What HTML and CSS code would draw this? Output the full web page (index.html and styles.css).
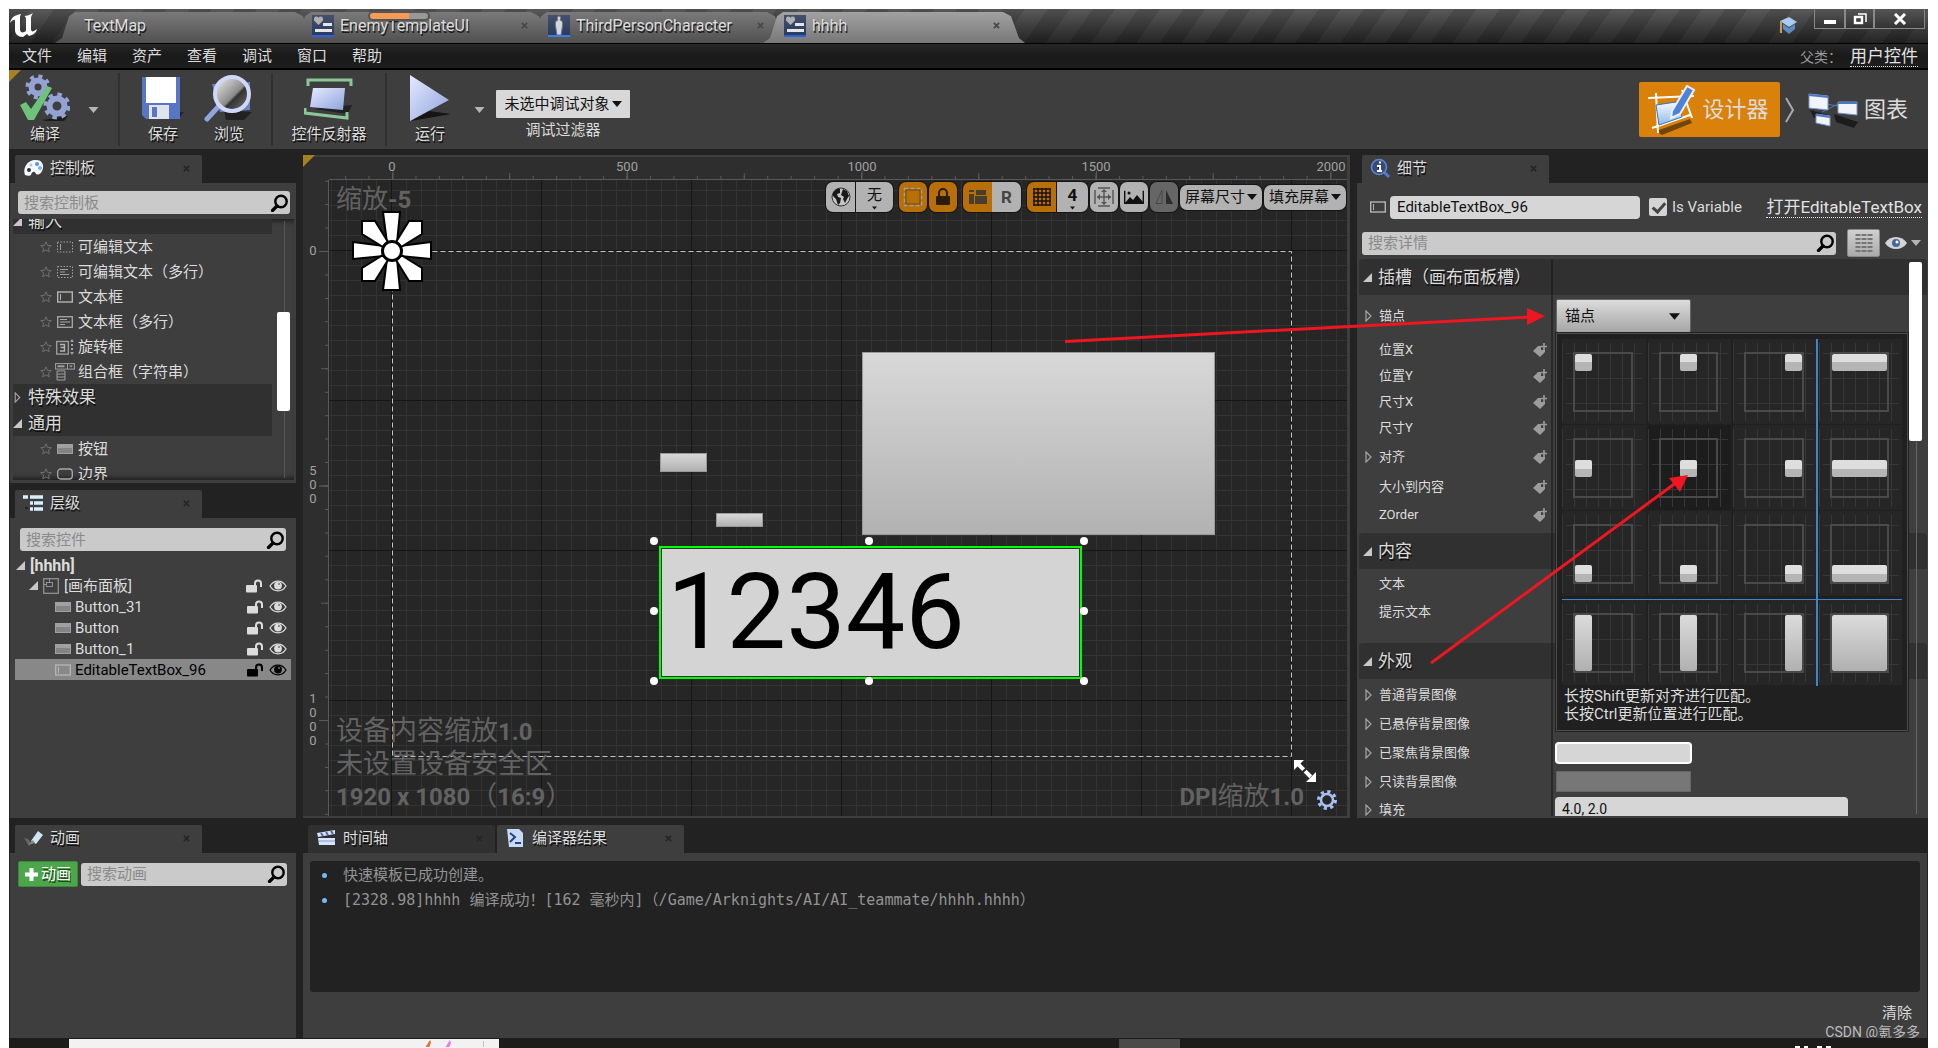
FILE: index.html
```html
<!DOCTYPE html>
<html lang="zh-CN">
<head>
<meta charset="utf-8">
<title>hhhh</title>
<link rel="stylesheet" href="styles.css">
</head>
<body>
<svg class="defs" aria-hidden="true">
  <defs>
    <linearGradient id="blue" x1="0" y1="0" x2="1" y2="1"><stop offset="0" stop-color="#e4eaff"/><stop offset="1" stop-color="#8fa3dc"/></linearGradient>
    <linearGradient id="ice" x1="0" y1="0" x2="0" y2="1"><stop offset="0" stop-color="#f6faff"/><stop offset="1" stop-color="#8fbce8"/></linearGradient>
    <linearGradient id="glass" x1="0" y1="0" x2="1" y2="1"><stop offset="0" stop-color="#f4f4f4"/><stop offset=".55" stop-color="#8a8a8a"/><stop offset=".6" stop-color="#333"/><stop offset="1" stop-color="#777"/></linearGradient>
    <linearGradient id="slate" x1="0" y1="0" x2="0" y2="1"><stop offset="0" stop-color="#44506b"/><stop offset="1" stop-color="#27395f"/></linearGradient>
  </defs>
  <symbol id="i-close" viewBox="0 0 8 8"><path d="M1 1l6 6M7 1L1 7" stroke="currentColor" stroke-width="2"/></symbol>
  <symbol id="i-search" viewBox="0 0 18 18"><circle cx="11" cy="7.500" r="5.700" fill="none" stroke="#000" stroke-width="2.400"/><path d="M7 12l-4.500 4.500" stroke="#000" stroke-width="3.200" stroke-linecap="round"/></symbol>
  <symbol id="i-caret" viewBox="0 0 10 6"><path d="M0 0h10L5 6z" fill="currentColor"/></symbol>
  <symbol id="i-open" viewBox="0 0 9 9"><path d="M9 0v9H0z" fill="#c8c8c8"/></symbol>
  <symbol id="i-shut" viewBox="0 0 7 12"><path d="M1 1l5 5-5 5z" fill="none" stroke="#a5a5a5" stroke-width="1.200"/></symbol>
  <symbol id="i-star" viewBox="0 0 12 12"><path d="M6 .8l1.500 3.500 3.800.3-2.900 2.500.9 3.700L6 8.900l-3.300 1.900.9-3.700L.7 4.600l3.800-.3z" fill="none" stroke="#707070"/></symbol>
  <symbol id="i-edit" viewBox="0 0 16 12"><rect x=".5" y="1" width="15" height="10" fill="none" stroke="#a0a0a0" stroke-dasharray="1.500 1.500"/><path d="M3.500 3v6" stroke="#a0a0a0"/></symbol>
  <symbol id="i-editm" viewBox="0 0 16 12"><rect x=".5" y=".5" width="15" height="11" fill="none" stroke="#a0a0a0" stroke-dasharray="1.500 1.500"/><path d="M3 3.500h8M3 6h5M3 8.500h9" stroke="#a0a0a0"/></symbol>
  <symbol id="i-box" viewBox="0 0 16 12"><rect x=".7" y="1" width="14.600" height="10" fill="none" stroke="#b4b4b4" stroke-width="1.400"/><path d="M3.500 3v6" stroke="#b4b4b4"/></symbol>
  <symbol id="i-boxm" viewBox="0 0 16 12"><rect x=".7" y=".7" width="14.600" height="10.600" fill="none" stroke="#a8a8a8" stroke-width="1.300"/><path d="M3 3.500h7M3 6h10M3 8.500h5" stroke="#a8a8a8"/></symbol>
  <symbol id="i-spin" viewBox="0 0 18 16"><rect x=".7" y="2.500" width="11.600" height="12.600" fill="none" stroke="#a0a0a0" stroke-width="1.300"/><path d="M4 5.500h4.500v6.500H4M4.500 8.500h4" fill="none" stroke="#b4b4b4" stroke-width="1.400"/><path d="M14 3l2-3 2 3zM14 13l2 3 2-3zM15 5h2v2h-2zM15 9h2v2h-2z" fill="#a0a0a0"/></symbol>
  <symbol id="i-combo" viewBox="0 0 20 18"><rect x=".6" y=".6" width="18.800" height="5.500" fill="none" stroke="#a0a0a0"/><path d="M2.500 3.300h7" stroke="#a0a0a0" stroke-width="2"/><path d="M12.500 1v5" stroke="#a0a0a0"/><path d="M14 2.500h4l-2 2z" fill="#a0a0a0"/><path d="M2 8h8v9H2zM2 11h8M2 14h8" fill="none" stroke="#a0a0a0"/></symbol>
  <symbol id="i-btn" viewBox="0 0 16 12"><rect y="1" width="16" height="10" fill="#a0a0a0"/><rect x="1" y="5" width="14" height="5" fill="#848484"/></symbol>
  <symbol id="i-border" viewBox="0 0 16 12"><rect x=".7" y="1" width="14.600" height="10" rx="3" fill="none" stroke="#a8a8a8" stroke-width="1.300"/></symbol>
  <symbol id="i-canvas" viewBox="0 0 16 16"><rect x=".7" y=".7" width="14.600" height="14.600" fill="none" stroke="#909090" stroke-width="1.300"/><rect x="3.500" y="4.500" width="6" height="4" fill="none" stroke="#909090"/><path d="M6.500 1v3M1 6.500h2" stroke="#8292c8"/></symbol>
  <symbol id="i-unlock" viewBox="0 0 17 14"><rect y="6" width="11" height="7.500" rx="1" fill="currentColor"/><path d="M9 6V4.500a3 3 0 0 1 6 0V8" fill="none" stroke="currentColor" stroke-width="2"/></symbol>
  <symbol id="i-eye" viewBox="0 0 18 12"><path d="M1 6c4-6.500 12-6.500 16 0-4 6.500-12 6.500-16 0z" fill="none" stroke="currentColor" stroke-width="1.300"/><circle cx="9" cy="5.600" r="3.900" fill="currentColor"/><circle cx="10" cy="4" r="1" fill="#777"/></symbol>
  <symbol id="i-tag" viewBox="0 0 14 14"><path d="M0 8l5-5h3v4h4v2l-5 5z" fill="#9c9c9c"/><path d="M11 0v7M8 3.500h6" stroke="#9c9c9c" stroke-width="1.600"/></symbol>
  <symbol id="i-widget" viewBox="0 0 22 22"><rect width="22" height="22" fill="url(#slate)"/><path d="M6.500 10L2 5.500C1 2 5 0 6.500 3 8 0 12 2 11 5.500z" fill="#b0b0b0"/><path d="M11 9.500h9M3 15.500h17" stroke="#e6e6e6" stroke-width="3"/><path d="M0 21h22" stroke="#2b62d8" stroke-width="2"/></symbol>
</svg>

<div class="app">
  <header class="titlebar">
    <svg class="logo" viewBox="0 0 32 30"><path d="M1 12C2 7 5 4 12 3c-1 2-1 3-1 5v10c0 3 2 4 4 3 1 0 2-1 2-2V8c0-2-1-3-2-3 3 0 6-1 9-3-1 2-2 3-2 5v11c0 2 1 3 3 2l3-2c-1 4-4 6-8 7l-2-2-4 3c-5 0-8-3-8-7V10c0-2-2-2-5 2z" fill="#fff"/></svg>
    <nav class="tabs">
      <button class="tab first">TextMap</button>
      <button class="tab second"><svg width="22" height="22"><use href="#i-widget"/></svg>EnemyTemplateUI<svg class="x" width="7" height="7"><use href="#i-close"/></svg></button>
      <button class="tab third"><svg width="22" height="22" viewBox="0 0 22 22"><rect width="22" height="22" fill="url(#slate)"/><path d="M11 1c2 0 2 3 1 4 3 1 3 3 2 9l-1 6H9l-1-6C7 8 7 6 10 5 9 4 9 1 11 1z" fill="#d4d8de" stroke="#6f7682"/><path d="M0 21h22" stroke="#3f7ce8" stroke-width="2"/></svg>ThirdPersonCharacter<svg class="x" width="7" height="7"><use href="#i-close"/></svg></button>
      <button class="tab active"><svg width="22" height="22"><use href="#i-widget"/></svg>hhhh<svg class="x" width="7" height="7"><use href="#i-close"/></svg></button>
    </nav>
    <span class="progress"></span>
    <div class="wincontrols">
      <svg width="20" height="20" viewBox="0 0 20 20"><path d="M2 5l9-4 8 5-8 5z" fill="#a9cdf0"/><path d="M5 8l6 4 6-4v5l-6 5-6-5z" fill="#5f8cc0"/><path d="M3 5v12" stroke="#c99a5b" stroke-width="2"/></svg>
      <div class="winbtns">
        <button aria-label="最小化"><svg width="14" height="12" viewBox="0 0 14 12"><path d="M1 9h12" stroke="#fff" stroke-width="4"/></svg></button><button aria-label="还原"><svg width="14" height="12" viewBox="0 0 14 12"><path d="M5 1h8v8" fill="none" stroke="#fff" stroke-width="1.500"/><rect x="2" y="4" width="7" height="6" fill="none" stroke="#fff" stroke-width="2.400"/></svg></button><button aria-label="关闭"><svg width="14" height="12" viewBox="0 0 14 12"><path d="M2 1l10 10M12 1L2 11" stroke="#fff" stroke-width="3"/></svg></button>
      </div>
    </div>
  </header>

  <nav class="menubar">
    <button>文件</button><button>编辑</button><button>资产</button><button>查看</button><button>调试</button><button>窗口</button><button>帮助</button>
    <span class="parent">父类：<a href="#">用户控件</a></span>
  </nav>

  <div class="toolbar">
    <button class="tool compile"><svg width="50" height="48" viewBox="0 0 50 48"><path d="M22 46l26-4-4 5H26z" fill="#1c1c1c"/><g fill="none" stroke="#93a3d4"><circle cx="18" cy="13" r="6.500" stroke-width="6"/><circle cx="18" cy="13" r="10.500" stroke-width="4" stroke-dasharray="4 4.250"/><circle cx="37" cy="32" r="7.500" stroke-width="6"/><circle cx="37" cy="32" r="11.500" stroke-width="4" stroke-dasharray="4.500 4.530"/></g><path d="M0 31l6-3 5 7L27 12l5 2-18 32H8z" fill="#6fc27c"/></svg>编译</button>
    <button class="drop" aria-label="编译选项"><svg width="11" height="6"><use href="#i-caret"/></svg></button>
    <i class="sep"></i>
    <button class="tool save"><svg width="50" height="48" viewBox="0 0 50 48"><path d="M10 40l36-2-6 7H12z" fill="#222"/><path d="M4 3h38v42H8l-4-4z" fill="#5876c4"/><path d="M8 3h30v26H8z" fill="#fff"/><path d="M11 31h20v14H11z" fill="#dfe3ee"/><path d="M14 33h5v10h-5z" fill="#5876c4"/></svg>保存</button>
    <button class="tool browse"><svg width="50" height="48" viewBox="0 0 50 48"><path d="M20 36l28 2-8 8H22z" fill="#222"/><path d="M8 10l38-2v28l-30 2z" fill="#6d83c0"/><path d="M14 33L3 45" stroke="#8fa5de" stroke-width="5" stroke-linecap="round"/><circle cx="28" cy="20" r="17" fill="url(#glass)" stroke="#cfd8f6" stroke-width="4"/></svg>浏览</button>
    <i class="sep"></i>
    <button class="tool reflect"><svg width="50" height="48" viewBox="0 0 50 48"><path d="M10 35l38-4-4 9z" fill="#222"/><path d="M4 12V6h43v6M1 34v5l42 5v-6" fill="none" stroke="#8cc79a" stroke-width="3"/><path d="M9 14h32l-2 22-33-3z" fill="url(#blue)"/></svg>控件反射器</button>
    <i class="sep"></i>
    <button class="tool play"><svg width="50" height="48" viewBox="0 0 50 48"><path d="M6 47l40-7-22-3z" fill="#151515"/><path d="M5 1l39 25L5 47z" fill="url(#blue)"/></svg>运行</button>
    <button class="drop run" aria-label="运行选项"><svg width="11" height="6"><use href="#i-caret"/></svg></button>
    <div class="debug"><button class="select">未选中调试对象<svg width="10" height="6"><use href="#i-caret"/></svg></button><span>调试过滤器</span></div>
    <div class="modes">
      <button class="mode on"><svg width="50" height="50" viewBox="0 0 50 50"><path d="M10 46l34-12 2 4-30 12z" fill="#70450c"/><path d="M2 13l46-2M6 43l38-13M10 8l2 40M36 5l10 28" stroke="#fff" stroke-width="2"/><path d="M10 20l20-3 6 15-23 8z" fill="url(#ice)" stroke="#3d73b8"/><path d="M26 26L41 1l7 4-14 24-9 4z" fill="#4d82d6" stroke="#e8f0fc" stroke-width="2"/></svg>设计器</button>
      <svg class="chev" width="10" height="26" viewBox="0 0 10 26"><path d="M1 1l7 12-7 12" fill="none" stroke="#aaa" stroke-width="2"/></svg>
      <button class="mode"><svg width="50" height="36" viewBox="0 0 50 36"><path d="M2 18l18 5-14 3zM26 22l24 8-4 6-18-6z" fill="#1c1c1c"/><path d="M18 12l12 2M14 20l20-10" stroke="#5877a8"/><g fill="#f2f4fa" stroke="#7896cf"><path d="M1 2l19 2v14L1 16zM30 10h19v13l-19-2zM8 22l14 2v10L8 31z"/></g><path d="M1 3l19 2M30 11h19M8 23l14 2" stroke="#4c77c4" stroke-width="2"/></svg>图表</button>
    </div>
  </div>

  <main class="main">
    <div class="left">
      <section class="dock">
        <button class="dtab"><svg width="22" height="18" viewBox="0 0 22 18"><path d="M2 16C-1 8 6 0 13 1c8 0 8 8 6 11-1 3-4 4-6 3-1-3-4-3-5 1-1 1-4 1-6 0z" fill="#f6f9ff"/><circle cx="14" cy="5" r="2" fill="#5596e0"/><circle cx="17" cy="9" r="2" fill="#7bb2ee"/><circle cx="8" cy="6" r="1.500" fill="#9cc4f0"/><circle cx="6" cy="11" r="2" fill="#333"/></svg>控制板<svg class="x" width="7" height="7"><use href="#i-close"/></svg></button>
        <div class="panel palette">
          <label class="search"><input type="text" placeholder="搜索控制板" aria-label="搜索控制板"><svg width="18" height="18"><use href="#i-search"/></svg></label>
          <div class="plist">
            <div class="group cut"><svg width="9" height="9"><use href="#i-open"/></svg>输入</div>
            <div class="item"><svg width="12" height="12"><use href="#i-star"/></svg><svg width="20" height="12"><use href="#i-edit"/></svg>可编辑文本</div>
            <div class="item"><svg width="12" height="12"><use href="#i-star"/></svg><svg width="20" height="12"><use href="#i-editm"/></svg>可编辑文本（多行）</div>
            <div class="item"><svg width="12" height="12"><use href="#i-star"/></svg><svg width="20" height="12"><use href="#i-box"/></svg>文本框</div>
            <div class="item"><svg width="12" height="12"><use href="#i-star"/></svg><svg width="20" height="12"><use href="#i-boxm"/></svg>文本框（多行）</div>
            <div class="item"><svg width="12" height="12"><use href="#i-star"/></svg><svg width="20" height="16"><use href="#i-spin"/></svg>旋转框</div>
            <div class="item"><svg width="12" height="12"><use href="#i-star"/></svg><svg width="20" height="18"><use href="#i-combo"/></svg>组合框（字符串）</div>
            <div class="group"><svg width="9" height="11"><use href="#i-shut"/></svg>特殊效果</div>
            <div class="group"><svg width="9" height="9"><use href="#i-open"/></svg>通用</div>
            <div class="item"><svg width="12" height="12"><use href="#i-star"/></svg><svg width="20" height="12"><use href="#i-btn"/></svg>按钮</div>
            <div class="item"><svg width="12" height="12"><use href="#i-star"/></svg><svg width="20" height="12"><use href="#i-border"/></svg>边界</div>
            <span class="scroll"></span>
          </div>
        </div>
      </section>
      <section class="dock">
        <button class="dtab"><svg width="22" height="18" viewBox="0 0 22 18"><path d="M0 3h5M7 3h13M7 9h3M11 9h9M7 15h3M11 15h9" stroke="#d8efff" stroke-width="3.500"/><path d="M2 14h3" stroke="#222" stroke-width="2"/></svg>层级<svg class="x" width="7" height="7"><use href="#i-close"/></svg></button>
        <div class="panel hier">
          <label class="search"><input type="text" placeholder="搜索控件" aria-label="搜索控件"><svg width="18" height="18"><use href="#i-search"/></svg></label>
          <div class="tree">
            <div class="node root"><svg width="9" height="9"><use href="#i-open"/></svg><span>[hhhh]</span></div>
            <div class="node sub"><svg width="9" height="9"><use href="#i-open"/></svg><svg width="16" height="16"><use href="#i-canvas"/></svg><span>[画布面板]</span><svg width="17" height="14"><use href="#i-unlock"/></svg><svg width="18" height="12"><use href="#i-eye"/></svg></div>
            <div class="node leaf"><svg width="16" height="12"><use href="#i-btn"/></svg><span>Button_31</span><svg width="17" height="14"><use href="#i-unlock"/></svg><svg width="18" height="12"><use href="#i-eye"/></svg></div>
            <div class="node leaf"><svg width="16" height="12"><use href="#i-btn"/></svg><span>Button</span><svg width="17" height="14"><use href="#i-unlock"/></svg><svg width="18" height="12"><use href="#i-eye"/></svg></div>
            <div class="node leaf"><svg width="16" height="12"><use href="#i-btn"/></svg><span>Button_1</span><svg width="17" height="14"><use href="#i-unlock"/></svg><svg width="18" height="12"><use href="#i-eye"/></svg></div>
            <div class="node leaf selected"><svg width="16" height="12"><use href="#i-box"/></svg><span>EditableTextBox_96</span><svg width="17" height="14"><use href="#i-unlock"/></svg><svg width="18" height="12"><use href="#i-eye"/></svg></div>
          </div>
        </div>
      </section>
    </div>

    <section class="designer">
      <svg class="rule-x"><path d="M63.500 20H1200" stroke="#5a5a5a" stroke-width="8" stroke-dasharray="1 233.500"/><path d="M63 21.500H1200" stroke="#5a5a5a" stroke-width="7" stroke-dasharray="1 116.250"/><path d="M16.100 23H1200" stroke="#5a5a5a" stroke-width="4" stroke-dasharray="1 22.450"/></svg>
      <svg class="rule-y"><path d="M20.500 71V700" stroke="#5a5a5a" stroke-width="9" stroke-dasharray="1 233.500"/><path d="M21.500 71V700" stroke="#5a5a5a" stroke-width="7" stroke-dasharray="1 116.250"/><path d="M23.500 .65V700" stroke="#5a5a5a" stroke-width="3" stroke-dasharray="1 22.450"/></svg>
      <span class="rx n0">0</span><span class="rx n500">500</span><span class="rx n1000">1000</span><span class="rx n1500">1500</span><span class="rx n2000">2000</span>
      <span class="ry m0">0</span><span class="ry m500">5<br>0<br>0</span><span class="ry m1000">1<br>0<br>0<br>0</span>
      <div class="view">
        <svg class="frame" viewBox="0 0 900 506"><rect x=".5" y=".5" width="899" height="505" fill="none" stroke="#c4c4c4" stroke-dasharray="5 3"/></svg>
        <div class="zoomtext">缩放<b>-5</b></div>
        <div class="info">设备内容缩放<b>1.0</b><br>未设置设备安全区<br><b>1920 x 1080</b>（<b>16:9</b>）</div>
        <div class="dpi"><b>DPI</b>缩放<b>1.0</b></div>
        <svg class="flower" viewBox="0 0 80 80"><g fill="#fff" stroke="#000" stroke-width="2"><path d="M31 1h17l-3 31H35zM31 79h17l-3-31H35zM1 31v17l31-3V35zM79 31v17l-31-3V35z"/><path d="M10 10h13l13 21-5 5-21-13zM70 10H57L44 31l5 5 21-13zM10 70h13l13-21-5-5-21 13zM70 70H57L44 49l5-5 21 13z"/><circle cx="40" cy="40" r="9.500" stroke-width="3"/></g></svg>
        <button class="w big" aria-label="Button_31"></button>
        <button class="w s1" aria-label="Button"></button>
        <button class="w s2" aria-label="Button_1"></button>
        <div class="sel"><input type="text" value="12346" aria-label="EditableTextBox_96">
          <i class="h t l"></i><i class="h t c"></i><i class="h t r"></i><i class="h m l"></i><i class="h m r"></i><i class="h b l"></i><i class="h b c"></i><i class="h b r"></i>
        </div>
        <svg class="resize" viewBox="0 0 22 22"><path d="M4 4l14 14" stroke="#fff" stroke-width="4" stroke-dasharray="8 2"/><path d="M0 0h10L0 10zM22 22H12l10-10z" fill="#fff"/></svg>
        <svg class="gear" viewBox="0 0 20 20"><circle cx="10" cy="10" r="6" fill="none" stroke="#a9bff0" stroke-width="2.500"/><circle cx="10" cy="10" r="8.500" fill="none" stroke="#a9bff0" stroke-width="3" stroke-dasharray="3.300 3.375"/></svg>
        <div class="vtools">
          <div class="vgrp gap"><button aria-label="本地化"><svg width="20" height="20" viewBox="0 0 20 20"><circle cx="10" cy="10" r="9" fill="#c4c4c4" stroke="#333"/><path d="M2 6c3-5 6-5 7-4L9 6 6 7l1 3 3 1-1 5-2 2-2-6-3-3zM12 2l4 2 2 5-2 3-2 4-2-4 1-2-3-2 1-3z" fill="#1a1a1a"/></svg></button><button class="stack wide">无<svg width="5" height="4"><use href="#i-caret"/></svg></button></div>
          <button class="on" aria-label="虚线轮廓"><svg width="20" height="20" viewBox="0 0 20 20"><rect x="1.500" y="1.500" width="17" height="17" fill="none" stroke="#a3a09a" stroke-width="1.500" stroke-dasharray="4 2"/><rect x="3" y="3" width="14" height="14" fill="none" stroke="#6b4a18"/></svg></button>
          <button class="on gap" aria-label="锁定"><svg width="14" height="18" viewBox="0 0 14 18"><rect y="8" width="14" height="9" rx="1" fill="#2a1c05"/><path d="M3 8V5a4 4 0 0 1 8 0v3" fill="none" stroke="#2a1c05" stroke-width="2"/></svg></button>
          <div class="vgrp pair gap"><button class="on" aria-label="布局"><svg width="18" height="16" viewBox="0 0 18 16"><path d="M0 1h5v2H0zM0 5h5v10H0zM7 1h10v5H7zM6 7h12v8H6z" fill="#473e30"/></svg></button><button><b>R</b></button></div>
          <div class="vgrp"><button class="on" aria-label="网格对齐"><svg width="18" height="18" viewBox="0 0 18 18"><path d="M1 0v18M5 0v18M9 0v18M13 0v18M17 0v18M0 1h18M0 5h18M0 9h18M0 13h18M0 17h18" stroke="#1d1304" stroke-width="1.500"/></svg></button><button class="stack mid"><b>4</b><svg width="5" height="4"><use href="#i-caret"/></svg></button></div>
          <button aria-label="缩放至适合"><svg width="20" height="20" viewBox="0 0 20 20"><path d="M1 3v14M19 3v14M4 1h12M4 19h12M10 3v14M3 10h14" stroke="#555" stroke-width="1.400"/><path d="M10 2l3 3H7zM10 18l3-3H7zM3 10l3-3v6zM17 10l-3-3v6z" fill="#555"/></svg></button>
          <button aria-label="背景"><svg width="20" height="14" viewBox="0 0 20 14"><path d="M.7.7v12.600h18.600V.7" fill="none" stroke="#111" stroke-width="1.400"/><path d="M1 13l5-6 3 3 4-5 6 7v1z" fill="#111"/><circle cx="5" cy="3" r="1.500" fill="#111"/></svg></button>
          <button class="off" aria-label="镜像"><svg width="18" height="16" viewBox="0 0 18 16"><path d="M7 1v13.500H1z" fill="none" stroke="#484848"/><path d="M11 1v14h7z" fill="#2c2c2c"/></svg></button>
          <button class="text">屏幕尺寸<svg width="10" height="6"><use href="#i-caret"/></svg></button>
          <button class="text">填充屏幕<svg width="10" height="6"><use href="#i-caret"/></svg></button>
        </div>
      </div>
    </section>

    <section class="dock details">
      <button class="dtab"><svg width="22" height="20" viewBox="0 0 22 20"><path d="M14 14l5 5" stroke="#4d7ad2" stroke-width="3"/><circle cx="9" cy="9" r="7.500" fill="#3a4a72" stroke="#5d86d8" stroke-width="1.600"/><path d="M7 8h3v5M7 13h5M9 4.500h2" stroke="#fff" stroke-width="2"/></svg>细节<svg class="x" width="7" height="7"><use href="#i-close"/></svg></button>
      <div class="panel dbody">
        <div class="namerow"><svg width="16" height="12"><use href="#i-box"/></svg><input class="name" type="text" value="EditableTextBox_96" aria-label="名称"><label class="check"><input type="checkbox" checked><span>Is Variable</span></label><a href="#">打开EditableTextBox</a></div>
        <div class="findrow"><label class="search"><input type="text" placeholder="搜索详情" aria-label="搜索详情"><svg width="18" height="18"><use href="#i-search"/></svg></label>
          <button class="listbtn" aria-label="属性矩阵"><svg width="18" height="18" viewBox="0 0 18 18"><path d="M3 0v18M9 0v18M15 0v18" stroke="#777" stroke-width="5" stroke-dasharray="2 2"/></svg></button>
          <button class="eyebtn" aria-label="视图选项"><svg width="22" height="14" viewBox="0 0 22 14"><path d="M0 7c5-8 17-8 22 0-5 8-17 8-22 0z" fill="#d4d4d4"/><circle cx="11" cy="7" r="4" fill="#46659a"/><circle cx="12" cy="6" r="1.500" fill="#fff"/></svg><svg width="10" height="6"><use href="#i-caret"/></svg></button></div>
        <div class="props">
          <h3><svg width="9" height="9"><use href="#i-open"/></svg>插槽（画布面板槽）</h3>
          <div class="group-a">
            <div class="prop tall"><span class="lab"><svg class="exp" width="7" height="12"><use href="#i-shut"/></svg>锚点</span>
              <div class="val"><button class="anchor">锚点<svg width="11" height="7"><use href="#i-caret"/></svg></button>
                <div class="popup">
                  <div class="cells">
                    <button class="at jl"><span><i></i></span></button><button class="at jc"><span><i></i></span></button><button class="at jr"><span><i></i></span></button><button class="at js"><span><i></i></span></button>
                    <button class="am jl"><span><i></i></span></button><button class="am jc hot"><span><i></i></span></button><button class="am jr"><span><i></i></span></button><button class="am js"><span><i></i></span></button>
                    <button class="ab jl"><span><i></i></span></button><button class="ab jc"><span><i></i></span></button><button class="ab jr"><span><i></i></span></button><button class="ab js"><span><i></i></span></button>
                    <button class="as jl"><span><i></i></span></button><button class="as jc"><span><i></i></span></button><button class="as jr"><span><i></i></span></button><button class="as js"><span><i></i></span></button>
                  </div>
                  <p>长按Shift更新对齐进行匹配。<br>长按Ctrl更新位置进行匹配。</p>
                </div>
              </div></div>
            <div class="prop"><span class="lab">位置X<svg class="tag" width="14" height="14"><use href="#i-tag"/></svg></span></div>
            <div class="prop"><span class="lab">位置Y<svg class="tag" width="14" height="14"><use href="#i-tag"/></svg></span></div>
            <div class="prop"><span class="lab">尺寸X<svg class="tag" width="14" height="14"><use href="#i-tag"/></svg></span></div>
            <div class="prop"><span class="lab">尺寸Y<svg class="tag" width="14" height="14"><use href="#i-tag"/></svg></span></div>
            <div class="prop r32"><span class="lab"><svg class="exp" width="7" height="12"><use href="#i-shut"/></svg>对齐<svg class="tag" width="14" height="14"><use href="#i-tag"/></svg></span></div>
            <div class="prop r28"><span class="lab">大小到内容<svg class="tag" width="14" height="14"><use href="#i-tag"/></svg></span></div>
            <div class="prop r28"><span class="lab">ZOrder<svg class="tag" width="14" height="14"><use href="#i-tag"/></svg></span></div>
          </div>
          <h3><svg width="9" height="9"><use href="#i-open"/></svg>内容</h3>
          <div class="group-b">
            <div class="prop r28"><span class="lab">文本</span></div>
            <div class="prop r28"><span class="lab">提示文本</span></div>
          </div>
          <h3><svg width="9" height="9"><use href="#i-open"/></svg>外观</h3>
          <div class="group-c">
            <div class="prop r29"><span class="lab"><svg class="exp" width="7" height="12"><use href="#i-shut"/></svg>普通背景图像</span></div>
            <div class="prop r29"><span class="lab"><svg class="exp" width="7" height="12"><use href="#i-shut"/></svg>已悬停背景图像</span></div>
            <div class="prop r29"><span class="lab"><svg class="exp" width="7" height="12"><use href="#i-shut"/></svg>已聚焦背景图像</span><div class="val"><span class="swatch focus"></span></div></div>
            <div class="prop r29"><span class="lab"><svg class="exp" width="7" height="12"><use href="#i-shut"/></svg>只读背景图像</span><div class="val"><span class="swatch ro"></span></div></div>
            <div class="prop r28"><span class="lab"><svg class="exp" width="7" height="12"><use href="#i-shut"/></svg>填充</span><div class="val"><input class="pad" type="text" value="4.0, 2.0" aria-label="填充"></div></div>
          </div>
          <span class="scroll"></span>
        </div>
      </div>
    </section>
  </main>

  <div class="bottom">
    <section class="dock anim">
      <button class="dtab"><svg width="22" height="18" viewBox="0 0 22 18"><path d="M1 9l4 1 3 4-2 3z" fill="#666"/><path d="M8 12L15 2l5 4-7 9z" fill="#cfe6f4"/><path d="M5 16l5-5 2 3z" fill="#8a8a8a"/></svg>动画<svg class="x" width="7" height="7"><use href="#i-close"/></svg></button>
      <div class="panel"><div class="animrow"><button class="add"><svg width="13" height="13" viewBox="0 0 13 13"><path d="M6.500 0v13M0 6.500h13" stroke="#fff" stroke-width="4"/></svg>动画</button><label class="search"><input type="text" placeholder="搜索动画" aria-label="搜索动画"><svg width="18" height="18"><use href="#i-search"/></svg></label></div></div>
    </section>
    <section class="dock results">
      <div class="dtabs">
        <button class="dtab idle"><svg width="22" height="18" viewBox="0 0 22 18"><path d="M1 4l18-3v4L2 8zM2 9h17v7H3z" fill="#d8e4fa"/><path d="M5 4l2 3M10 3l2 3M15 2l2 3" stroke="#4a67a8" stroke-width="2"/><path d="M3 12h16" stroke="#7f9ad8"/></svg>时间轴<svg class="x" width="7" height="7"><use href="#i-close"/></svg></button>
        <button class="dtab"><svg width="22" height="20" viewBox="0 0 22 20"><path d="M2 1h12l4 4v14H4z" fill="#c6d9f6"/><path d="M5 5l5 4-5 5M10 15h6" fill="none" stroke="#27437e" stroke-width="2"/></svg>编译器结果<svg class="x" width="7" height="7"><use href="#i-close"/></svg></button>
      </div>
      <div class="panel">
        <ul class="log"><li>快速模板已成功创建。</li><li>[2328.98]hhhh 编译成功！[162 毫秒内]（/Game/Arknights/AI/AI_teammate/hhhh.hhhh）</li></ul>
        <button class="clear">清除</button>
        <span class="mark">CSDN @氪多多</span>
      </div>
    </section>
  </div>
  <footer class="taskbar"><span class="field"><svg width="60" height="8" viewBox="0 0 60 8"><path d="M1 9l5-8 1 2-2 6z" fill="#e0702c"/><path d="M21 9l5-8 1 3-2 5z" fill="#e87ae8"/><path d="M60 2v6" stroke="#999"/></svg></span><span class="chip"></span><svg class="clock" width="40" height="2" viewBox="0 0 40 2"><path d="M0 1h5M9 1h4M22 1h5M31 1h5" stroke="#fff" stroke-width="2"/></svg></footer>
</div>

<svg class="arrows" viewBox="0 0 500 370" aria-hidden="true"><path d="M0 41.500L464 17M366 363L612 182" fill="none" stroke="#ee1620" stroke-width="3"/><path d="M462 8l18 8-18 9z" fill="#ee1620"/><path d="M623 175l-19 3 11 14z" fill="#ee1620"/></svg>
</body>
</html>
```
FILE: styles.css
```css
* { box-sizing: border-box; }
body {
  margin: 0;
  padding: 9px 10px 0 9px;
  background: #fff;
  color: #dcdcdc;
  font: 15px/20px Roboto, "Noto Sans CJK SC", sans-serif;
  overflow: hidden;
}
button, input { font: inherit; color: inherit; border: 0; margin: 0; padding: 0; background: none; }
button { display: flex; align-items: center; white-space: nowrap; cursor: pointer; }
svg { display: block; flex: none; }
h3, p, ul { margin: 0; padding: 0; font-weight: 400; }
.defs { position: absolute; width: 0; height: 0; }

.app { display: flex; flex-direction: column; height: calc(100vh - 9px); background: #222; }

/* title bar */
.titlebar {
  position: relative;
  display: flex;
  height: 34px;
  background: linear-gradient(rgba(255,255,255,.12), rgba(0,0,0,.45)), repeating-linear-gradient(125deg, #363636 0 18px, #424242 18px 37px);
}
.logo { width: 32px; height: 30px; margin-top: 2px; }
.tabs { display: flex; align-items: flex-end; margin-left: 14px; }
.tab {
  width: 262px;
  height: 31px;
  margin-right: -26px;
  padding: 0 25px 4px 21px;
  gap: 6px;
  font-size: 16px;
  background: linear-gradient(#7a7a7a, #505050);
  clip-path: polygon(0 100%, 7px 84%, 14px 14%, 20px 0, 240px 0, 248px 14%, 256px 84%, 100% 100%);
  text-shadow: 1px 2px 0 #1c1c1c;
  position: relative;
}
.first { z-index: 4; padding-left: 29px; }
.second { z-index: 3; }
.third { z-index: 2; }
.tab.active { z-index: 5; background: linear-gradient(#a2a2a2, #787878); }
.x { margin-left: auto; color: #484848; }
.progress {
  position: absolute; z-index: 6; left: 359px; top: 2px; width: 62px; height: 10px;
  border: 2px solid #555; border-radius: 5px;
  background: linear-gradient(90deg, #f79a55 68%, #999 68%);
}
.wincontrols { display: flex; margin-left: auto; gap: 16px; }
.wincontrols > svg { margin-top: 7px; }
.winbtns { display: flex; height: 20px; margin-right: 3px; }
.winbtns button { width: 29px; justify-content: center; background: linear-gradient(#555, #333); border: 1px solid #888; border-top: 0; }
.winbtns button:first-child { width: 31px; }
.winbtns button:last-child { width: 51px; }

.menubar {
  display: flex; align-items: center; height: 27px; padding: 0 10px 0 13px; gap: 25px;
  background: linear-gradient(#272727, #191919 50%, #1e1e1e);
  border-top: 1px solid #000; border-bottom: 2px solid #000;
}
.parent { margin-left: auto; font-size: 14px; color: #999; }
.parent a { margin-left: 8px; font-size: 17px; }
a { color: #e2e2e2; text-decoration: none; border-bottom: 1px dotted #e2e2e2; }

/* toolbar */
.toolbar { display: flex; height: 79px; flex: none; background: #3e3e3e; position: relative; }
.toolbar::before { content: ""; position: absolute; border: 6px solid; border-color: #a5821f transparent transparent #a5821f; }
.tool { flex-direction: column; padding-top: 4px; width: 66px; line-height: 24px; text-shadow: 1px 2px 0 #111; z-index: 1; }
.compile { margin-left: 3px; }
.drop { width: 32px; justify-content: center; color: #b5b5b5; }
.sep { width: 2px; margin: 3px 0; background: #303030; }
.compile + .drop { width: 12px; margin: 0 19px 0 9px; }
.save { margin-left: 10px; }
.browse { margin: 0 9px 0 0; }
.reflect { width: 112px; }
.play { margin-left: 10px; }
.run { width: 33px; }
.debug { display: flex; flex-direction: column; align-items: center; padding-top: 20px; }
.select { height: 28px; width: 134px; justify-content: center; gap: 2px; background: #d8d8d8; color: #111; border-radius: 1px; }
.debug span { line-height: 24px; }
.modes { display: flex; align-items: center; margin: 0 20px 0 auto; font-size: 22px; height: 79px; }
.mode { gap: 6px; }
.mode.on { width: 141px; height: 55px; justify-content: center; background: #d9810b; border-radius: 2px; padding-right: 4px; }
.chev { margin: 0 13px 0 5px; }

/* docks */
.main { flex: 1; min-height: 0; display: grid; grid-template-columns: 286px 1fr 571px; gap: 7px; padding: 6px 0 0 1px; }
.left { display: flex; flex-direction: column; gap: 7px; min-height: 0; }
.dock { display: flex; flex-direction: column; flex: 1; min-height: 0; min-width: 0; }
.dtab { width: 187px; height: 28px; flex: none; margin-left: 5px; padding: 0 12px 2px 8px; gap: 5px; background: #3e3e3e; border-radius: 2px 2px 0 0; text-shadow: 1px 2px 0 #111; }
.dtab .x { color: #262626; }
.dtab.idle { background: #303030; }
.panel { flex: 1; min-height: 0; background: #3e3e3e; }
.search { display: flex; align-items: center; height: 23px; background: #cacaca; border-radius: 3px; padding: 0 2px 0 6px; }
.search input { flex: 1; min-width: 0; outline: 0; color: #111; }
.search input::placeholder { color: #8a8a8a; opacity: 1; }

.palette { display: flex; flex-direction: column; padding: 8px 2px 3px 3px; }
.palette .search { margin: 0 4px 0 5px; }
.plist { flex: 1; min-height: 0; overflow: hidden; margin-top: 5px; padding-right: 22px; position: relative; box-shadow: inset 0 6px 5px -4px #1c1c1c, inset 0 -6px 5px -4px #1c1c1c; }
.group { display: flex; align-items: center; gap: 6px; height: 26px; background: #303030; font-size: 17px; text-shadow: 1px 2px 0 #111; }
.cut { margin-top: -11px; }
.item { display: flex; align-items: center; gap: 3px; height: 25px; padding-left: 27px; }
.plist .scroll { position: absolute; right: 9px; top: 2px; bottom: 2px; width: 1px; background: #555; }
.plist .scroll::after { content: ""; position: absolute; left: -7px; top: 91px; width: 13px; height: 99px; background: #fff; border-radius: 2px; }

.hier { padding: 10px 5px; }
.hier .search { margin: 0 5px; }
.tree { padding-top: 5px; }
.node { display: flex; align-items: center; height: 21px; gap: 5px; padding-right: 4px; }
.node span { flex: 1; }
.node.root { height: 19px; padding-left: 1px; font-size: 16px; font-weight: 700; }
.sub { padding-left: 14px; gap: 5px; }
.leaf { padding-left: 40px; gap: 4px; }
.leaf svg + svg, .sub span ~ svg + svg { margin-left: 1px; }
.selected { background: #888; color: #000; }

/* designer canvas */
.designer { position: relative; background: #2e2e2e; box-shadow: inset 0 2px #3e3e3e, inset -3px -2px #3e3e3e; overflow: hidden; min-width: 0; }
.designer::before { content: ""; position: absolute; left: 0; top: 0; border: 6px solid; border-color: #a5821f transparent transparent #a5821f; }
.rule-x { position: absolute; left: 26px; top: 0; width: calc(100% - 29px); height: 25px; border-bottom: 1px solid #5a5a5a; }
.rule-y { position: absolute; left: 0; top: 25px; width: 26px; height: calc(100% - 27px); border-right: 1px solid #5a5a5a; }
.rx, .ry { position: absolute; font-size: 13px; line-height: 14px; color: #a0a0a0; text-align: center; width: 40px; }
.rx { top: 5px; }
.n0 { left: 69px; } .n500 { left: 304px; } .n1000 { left: 539px; } .n1500 { left: 773px; } .n2000 { left: 1008px; }
.ry { left: 0; width: 20px; }
.m0 { top: 89px; } .m500 { top: 309px; } .m1000 { top: 537px; }
.view {
  position: absolute; left: 26px; top: 25px; right: 3px; bottom: 2px; overflow: hidden;
  background-color: #262626;
  background-image: linear-gradient(90deg, #161616 1px, transparent 1px), linear-gradient(#161616 1px, transparent 1px), linear-gradient(90deg, #333 1px, transparent 1px), linear-gradient(#333 1px, transparent 1px);
  background-size: 150px 150px, 150px 150px, 15px 15px, 15px 15px;
  background-position: 62px 70px, 62px 70px, 2px 10px, 2px 10px;
}
.frame { position: absolute; left: 63px; top: 71px; width: 900px; height: 506px; }
.zoomtext, .info, .dpi { position: absolute; color: #626262; font-size: 26px; line-height: 32px; }
.zoomtext b, .info b, .dpi b { font-size: 24px; }
.zoomtext { left: 7px; top: 3px; }
.info { left: 7px; bottom: 3px; font-size: 27px; }
.dpi { right: 43px; bottom: 3px; }
.flower { position: absolute; left: 23px; top: 31px; width: 80px; height: 80px; }
.w { position: absolute; background: linear-gradient(#d8d8d8, #b2b2b2); border: 1px solid #999; }
.big { left: 533px; top: 172px; width: 353px; height: 183px; }
.s1 { left: 331px; top: 273px; width: 47px; height: 19px; }
.s2 { left: 387px; top: 333px; width: 47px; height: 14px; }
.sel { position: absolute; left: 330px; top: 366px; width: 423px; height: 133px; border: 2px solid #0f0; }
.sel input { width: 100%; height: 100%; padding: 0 0 2px 5px; background: #d4d4d4; color: #000; font-size: 106px; line-height: 124px; border: 1px solid #333; display: block; }
.h { position: absolute; width: 8px; height: 8px; border-radius: 4px; background: #fff; }
.h.t { top: -11px; } .h.m { top: 59px; } .h.b { bottom: -8px; }
.h.l { left: -11px; } .h.c { left: 204px; } .h.r { right: -8px; }
.resize { position: absolute; left: 965px; top: 580px; width: 22px; height: 22px; }
.gear { position: absolute; right: 10px; bottom: 6px; width: 20px; height: 20px; }
.vtools { position: absolute; right: 1px; top: 2px; display: flex; align-items: center; gap: 2px; color: #111; }
.vtools button { width: 28px; height: 30px; justify-content: center; background: #b2b2b2; border-radius: 7px; box-shadow: 0 0 0 1px #151515; }
.vtools .gap { margin-right: 4px; }
.vgrp { display: flex; gap: 1px; }
.vtools .vgrp button { width: 29px; }
.vtools .vgrp button:first-child { border-radius: 7px 0 0 7px; }
.vtools .vgrp button:last-child { border-radius: 0 7px 7px 0; }
.pair { gap: 0; border-radius: 7px; box-shadow: 0 0 0 1px #151515; }
.vtools .pair button { box-shadow: none; }
.vtools .stack { flex-direction: column; line-height: 18px; gap: 2px; padding-top: 1px; }
.vtools .vgrp .wide { width: 37px; }
.vtools .vgrp .mid { width: 31px; }
.vtools b { font-size: 17px; color: #444; }
.vtools .stack b { color: #111; }
.vtools button.on { background: #b96f07; }
.vtools button.off { background: #666; }
.vtools button.text { width: 82px; height: 25px; gap: 2px; }

/* details */
.dbody { display: flex; flex-direction: column; padding: 12px 1px 2px 2px; }
.namerow { display: flex; align-items: center; height: 24px; padding: 0 5px 0 11px; }
.name { width: 250px; height: 23px; margin: 0 9px 0 4px; padding-left: 7px; border-radius: 4px; background: #d6d6d6; color: #111; }
.check { display: flex; align-items: center; gap: 5px; }
.check input { appearance: none; width: 18px; height: 18px; background: #d4d4d4; border-radius: 2px; position: relative; }
.check input::after { content: ""; position: absolute; left: 6px; top: 2px; width: 5px; height: 10px; border: solid #444; border-width: 0 3px 3px 0; transform: rotate(42deg); }
.namerow a { margin-left: auto; font-size: 17px; white-space: nowrap; }
.findrow { display: flex; align-items: center; margin-top: 10px; height: 28px; padding: 0 6px 0 3px; }
.findrow .search { flex: 1; margin-right: 11px; }
.listbtn { width: 33px; height: 28px; justify-content: center; background: linear-gradient(#d0d0d0, #aaa); border: 1px solid #888; border-radius: 2px; }
.eyebtn { margin-left: 5px; gap: 4px; color: #b5b5b5; }
.props { flex: 1; min-height: 0; overflow: hidden; position: relative; margin-top: 2px; font-size: 13px; }
.props h3 { display: flex; align-items: center; gap: 6px; height: 36px; padding-left: 4px; background: linear-gradient(90deg, transparent 192px, #222 192px 194px, transparent 194px), #303030; border-radius: 4px 4px 0 0; font-size: 17px; text-shadow: 1px 2px 0 #111; }
.group-a, .group-b, .group-c { background: linear-gradient(#292929, #292929) 192px 0 / 2px 100% no-repeat; }
.group-a { padding-bottom: 4px; }
.group-b { padding: 1px 0 17px; }
.group-c { padding-top: 1px; }
.prop { display: grid; grid-template-columns: 194px 1fr; height: 26px; }
.tall { height: 42px; }
.r32 { height: 32px; }
.r28 { height: 28px; }
.r29 { height: 29px; }
.lab { display: flex; align-items: center; padding: 0 6px 0 20px; position: relative; }
.exp { margin: 0 7px 0 -14px; }
.tag { margin-left: auto; }
.val { position: relative; display: flex; align-items: center; padding-left: 3px; }
.anchor { width: 135px; height: 34px; padding: 0 10px 0 8px; justify-content: space-between; background: linear-gradient(#dcdcdc, #a6a6a6); color: #111; font-size: 15px; border: 1px solid #666; border-radius: 2px; }
.popup { position: absolute; z-index: 3; left: 3px; top: 38px; width: 352px; padding: 5px 5px 7px; background: #202020; border: 1px solid #4c4c4c; outline: 1px solid #222; }
.cells { position: relative; display: grid; grid-template-columns: repeat(4, 1fr); grid-template-rows: 85px 85px 88px 86px; gap: 1px 2px; }
.cells::before, .cells::after { content: ""; position: absolute; background: #3b86cc; z-index: 1; }
.cells::before { left: 254px; top: 0; bottom: 0; width: 2px; }
.cells::after { left: 0; right: 0; top: 260px; height: 1px; }
.cells button {
  padding: 13px 13px 12px 11px; align-items: stretch; height: 85px;
  background: linear-gradient(90deg, #373737 1px, transparent 1px) 12px 4px / 12px 78px repeat-x, linear-gradient(#373737 1px, transparent 1px) 4px 14px / 76px 25px repeat-y, #262626;
}
.cells .hot { background-color: #1d1d1d; }
.cells span { flex: 1; display: flex; border: 2px solid #4a4a4a; }
.cells i { width: 17px; height: 17px; background: linear-gradient(#dedede 50%, #b5b5b5 50%); border-radius: 2px; }
.am span { align-items: center; }
.ab span { align-items: flex-end; }
.as i { height: auto; background: linear-gradient(#dcdcdc, #b0b0b0); }
.jc span { justify-content: center; }
.jr span { justify-content: flex-end; }
.js i { width: 100%; }
.popup p { padding: 1px 2px 0; font-size: 15px; line-height: 18px; }
.swatch { width: 137px; height: 22px; background: #d6d6d6; border: 2px solid #fff; border-radius: 4px; }
.ro { width: 135px; height: 21px; background: #777; border: 1px solid #666; border-radius: 0; }
.focus { margin-left: -1px; }
.pad { align-self: flex-start; margin: 1px 0 0 -1px; width: 293px; height: 24px; padding-left: 7px; background: #d6d6d6; color: #111; border-radius: 4px; font-size: 14px; line-height: 24px; }
.props .scroll { position: absolute; right: 10px; top: 3px; bottom: 2px; width: 1px; background: #666; }
.props .scroll::after { content: ""; position: absolute; left: -7px; top: 0; width: 13px; height: 179px; background: #fff; border-radius: 2px; }

/* bottom docks */
.bottom { display: flex; gap: 7px; height: 220px; flex: none; padding: 7px 1px 0 1px; }
.anim { flex: none; width: 286px; }
.animrow { display: flex; align-items: center; gap: 3px; padding: 8px 9px 0 8px; }
.animrow .search { flex: 1; min-width: 0; }
.add { width: 60px; flex: none; height: 26px; justify-content: center; gap: 3px; background: #4ea64c; border: 1px solid #3a8a3a; border-radius: 2px; color: #fff; text-shadow: 1px 2px 0 #1d4a1d; }
.dtabs { display: flex; }
.dtabs .dtab + .dtab { margin-left: 2px; }
.results .panel { display: flex; flex-direction: column; padding: 8px 7px 0 7px; }
.log { list-style: none; height: 131px; flex: none; padding: 2px 10px; background: #222; border-radius: 3px; color: #939393; font: 15px/25px "DejaVu Sans Mono", "Noto Sans CJK SC", monospace; }
.log li { display: flex; align-items: center; gap: 16px; }
.log li::before { content: ""; width: 5px; height: 5px; border-radius: 3px; background: #72bcf0; margin-left: 2px; }
.clear { align-self: flex-end; margin: 11px 8px 0 0; height: 22px; }
.mark { align-self: flex-end; font-size: 14px; line-height: 18px; color: #bbb; }
.taskbar { position: relative; display: flex; height: 10px; flex: none; padding: 1px 0 0 60px; background: #1c1c1c; }
.field { width: 430px; height: 9px; background: #f2f2f2; display: flex; justify-content: flex-end; padding-right: 15px; }
.chip { width: 61px; margin-left: 620px; background: #4a4a4a; }
.clock { margin: 7px 93px 0 auto; }

.arrows { position: absolute; left: 1065px; top: 300px; width: 500px; height: 370px; overflow: visible; pointer-events: none; z-index: 10; }
```
